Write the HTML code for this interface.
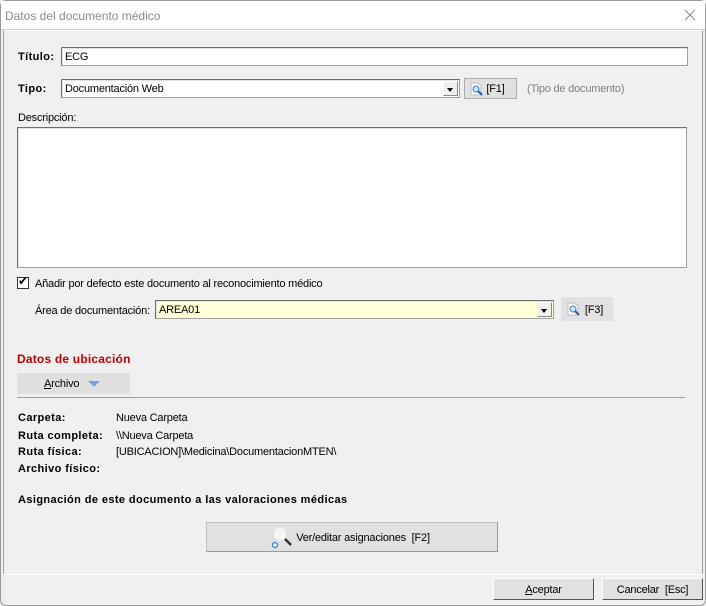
<!DOCTYPE html>
<html><head><meta charset="utf-8"><style>
*{box-sizing:border-box;margin:0;padding:0}
body{width:706px;height:606px;background:#f0f0f0;font-family:"Liberation Sans",sans-serif;font-size:11px;color:#000;position:relative;overflow:hidden;letter-spacing:-0.2px}
.a{position:absolute;white-space:nowrap}
.b{font-weight:bold;letter-spacing:0.4px}
.inp{position:absolute;background:#fff;border:1px solid #a0a0a0;border-top-color:#6d6d6d;border-left-color:#6d6d6d;box-shadow:inset 1px 1px 0 #e3e3e3;padding:3px 3px 1px;line-height:13px}
.dd{position:absolute;top:1px;right:1px;width:15px;bottom:1px;background:#f0f0f0;border:1px solid #fff;border-right-color:#888;border-bottom-color:#888}
.dd:after{content:"";position:absolute;left:3px;top:6px;border:3.5px solid transparent;border-top:4px solid #000}
.btn{position:absolute;background:#e1e1e1;border:1px solid #adadad;text-align:center}
</style></head><body>
<div class="a" style="left:0;top:0;width:706px;height:606px;border:1px solid #9a9a9a;border-radius:6px"></div>
<div class="a" style="left:1px;top:1px;width:704px;height:29px;background:#fff;border-bottom:1px solid #d0d0d0"></div>
<div class="a" style="left:5px;top:9px;font-size:12px;color:#8a8a8a;letter-spacing:0">Datos del documento médico</div>
<svg class="a" style="left:684px;top:9px" width="12" height="12" viewBox="0 0 12 12"><path d="M1 1l10 10M11 1L1 11" stroke="#888" stroke-width="1"/></svg>
<div class="a" style="left:3px;top:30px;width:700px;height:545px;border:1px solid #a0a0a0;border-top-color:#fff;border-left-color:#a0a0a0"></div>
<div class="a" style="left:3px;top:574px;width:700px;height:1px;background:#fff"></div>

<div class="a b" style="left:18px;top:51px">Título:</div>
<div class="inp" style="left:61px;top:47px;width:627px;height:19px">ECG</div>

<div class="a b" style="left:18px;top:83px">Tipo:</div>
<div class="inp" style="left:61px;top:79px;width:399px;height:19px">Documentación Web<div class="dd"></div></div>
<div class="btn" style="left:464px;top:78px;width:53px;height:21px;padding-top:4px;padding-left:10px"><svg class="a" style="left:5px;top:3px" width="14" height="14" viewBox="0 0 14 14"><path d="M1 1h7l3 3v9H1z" fill="#fff" stroke="#bbb"/><circle cx="6" cy="7" r="3" fill="#cfe6f7" stroke="#3a7bc8"/><path d="M8 9l4 4" stroke="#2a5a9a" stroke-width="2"/></svg>[F1]</div>
<div class="a" style="left:527px;top:83px;color:#808080">(Tipo de documento)</div>

<div class="a" style="left:18px;top:112px">Descripción:</div>
<div class="inp" style="left:17px;top:127px;width:670px;height:141px"></div>

<div class="a" style="left:17px;top:277px;width:12px;height:12px;background:#fff;border:1px solid #333"></div>
<div class="a" style="left:18px;top:274px;font-size:12px">✔</div>
<div class="a" style="left:35px;top:278px">Añadir por defecto este documento al reconocimiento médico</div>

<div class="a" style="left:35px;top:305px">Área de documentación:</div>
<div class="inp" style="left:155px;top:300px;width:399px;height:19px;background:#ffffd8">AREA01<div class="dd"></div></div>
<div class="btn" style="left:561px;top:297px;width:52px;height:24px;padding-top:6px;padding-left:14px;border-color:#e1e1e1"><svg class="a" style="left:5px;top:4px" width="14" height="14" viewBox="0 0 14 14"><path d="M1 1h7l3 3v9H1z" fill="#fff" stroke="#bbb"/><circle cx="6" cy="7" r="3" fill="#cfe6f7" stroke="#3a7bc8"/><path d="M8 9l4 4" stroke="#2a5a9a" stroke-width="2"/></svg>[F3]</div>

<div class="a b" style="left:17px;top:352px;color:#c00000;font-size:12px;letter-spacing:0.2px">Datos de ubicación</div>
<div class="a" style="left:17px;top:373px;width:113px;height:21px;background:#e0e0e0"></div>
<div class="a" style="left:44px;top:378px"><u>A</u>rchivo</div>
<div class="a" style="left:88px;top:381px;border:6px solid transparent;border-top:6px solid #7b9ee0;border-bottom:0"></div>
<div class="a" style="left:17px;top:397px;width:668px;height:1px;background:#a0a0a0"></div>

<div class="a b" style="left:18px;top:412px">Carpeta:</div><div class="a" style="left:116px;top:412px">Nueva Carpeta</div>
<div class="a b" style="left:18px;top:430px">Ruta completa:</div><div class="a" style="left:116px;top:430px">\\Nueva Carpeta</div>
<div class="a b" style="left:18px;top:446px">Ruta física:</div><div class="a" style="left:116px;top:446px">[UBICACION]\Medicina\DocumentacionMTEN\</div>
<div class="a b" style="left:18px;top:463px">Archivo físico:</div>
<div class="a b" style="left:18px;top:494px">Asignación de este documento a las valoraciones médicas</div>

<div class="btn" style="left:206px;top:522px;width:292px;height:30px;padding-top:9px;padding-left:22px;border-color:#c0c0c0 #999 #999 #c0c0c0;background:#e1e1e1">Ver/editar asignaciones &nbsp;[F2]</div>
<svg class="a" style="left:270px;top:525px" width="24" height="24" viewBox="0 0 24 24"><circle cx="10" cy="9" r="7" fill="#f4f4f4" stroke="#ddd"/><path d="M15 14l6 6" stroke="#333" stroke-width="2.5"/><circle cx="5" cy="20" r="2.5" fill="#fff" stroke="#3a8ad8" stroke-width="1.5"/></svg>

<div class="btn" style="left:493px;top:578px;width:101px;height:22px;padding-top:5px;border-color:#fff #555 #555 #fff"><u>A</u>ceptar</div>
<div class="btn" style="left:602px;top:578px;width:101px;height:22px;padding-top:5px;border-color:#fff #555 #555 #fff">Cancelar &nbsp;[Esc]</div>
</body></html>
